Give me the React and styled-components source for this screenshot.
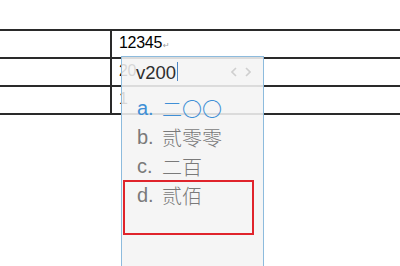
import React from "react";
import styled, { createGlobalStyle } from "styled-components";

const GlobalStyle = createGlobalStyle`
  html, body {
    margin: 0;
    padding: 0;
    background: #ffffff;
  }
  body {
    font-family: "Liberation Sans", Arial, sans-serif;
  }
`;

const Page = styled.div`
  position: relative;
  width: 400px;
  height: 266px;
  overflow: hidden;
  padding-top: 29px;
  box-sizing: border-box;
`;

const Table = styled.div`
  display: flex;
  flex-direction: column;
  border-bottom: 2px solid #2a2a2a;
`;

const Row = styled.div`
  display: grid;
  grid-template-columns: 110px 1fr;
  height: 26px;
  border-top: 2px solid #2a2a2a;
`;

const Cell = styled.div`
  padding: 3px 0 0 7px;
  font-size: 16px;
  letter-spacing: -0.3px;
  line-height: 18px;
  color: #000;
  border-left: ${(p) => (p.$divider ? "2px solid #2a2a2a" : "none")};
  white-space: nowrap;
`;

const Mark = styled.span`
  font-family: "DejaVu Sans", sans-serif;
  font-size: 8px;
  color: #9a9a9a;
  margin-left: 1px;
`;

const Popup = styled.div`
  position: absolute;
  left: 121px;
  top: 56px;
  width: 143px;
  height: 220px;
  box-sizing: border-box;
  border: 1px solid #8dbbdd;
  background: rgba(244, 244, 244, 0.88);
`;

const InputBar = styled.div`
  display: flex;
  align-items: center;
  height: 29px;
  margin: 0 6px 0 8px;
  padding-left: 6px;
  border-bottom: 1px solid #dcdcdc;
`;

const Typed = styled.span`
  font-size: 18.5px;
  line-height: 20px;
  color: #2e2e2e;
  padding-top: 2px;
`;

const Caret = styled.span`
  width: 1px;
  height: 19px;
  margin-left: 1px;
  background: #4d86c4;
`;

const Pager = styled.div`
  display: flex;
  gap: 8px;
  margin-left: auto;
  margin-right: 6px;
  padding-top: 1px;
`;

const List = styled.div`
  display: flex;
  flex-direction: column;
  padding: 7px 0 0 15px;
`;

const Item = styled.div`
  display: flex;
  height: 29px;
  align-items: center;
  font-size: 20px;
  color: ${(p) => (p.$active ? "#3f8fd6" : "#7a7a7a")};
`;

const Label = styled.span`
  width: 25px;
  font-family: "Liberation Sans", Arial, sans-serif;
`;

const Word = styled.span`
  font-family: "Noto Sans CJK SC", sans-serif;
  font-weight: 300;
`;

const Highlight = styled.div`
  position: absolute;
  left: 1px;
  top: 123px;
  width: 131px;
  height: 55px;
  box-sizing: border-box;
  border: 2px solid #e0242c;
`;

function Chevron({ dir }) {
  const pts = dir === "left" ? "5,1 1,5 5,9" : "1,1 5,5 1,9";
  return (
    <svg width="6" height="10" viewBox="0 0 6 10">
      <polyline points={pts} fill="none" stroke="#cfcfcf" strokeWidth="1.6" />
    </svg>
  );
}

const candidates = [
  { key: "a.", text: "二〇〇", active: true },
  { key: "b.", text: "贰零零" },
  { key: "c.", text: "二百" },
  { key: "d.", text: "贰佰" },
];

export default function App() {
  return (
    <>
      <GlobalStyle />
      <Page>
        <Table>
          <Row>
            <Cell />
            <Cell $divider>
              12345<Mark>↵</Mark>
            </Cell>
          </Row>
          <Row>
            <Cell />
            <Cell $divider>20</Cell>
          </Row>
          <Row>
            <Cell />
            <Cell $divider>1</Cell>
          </Row>
        </Table>

        <Popup>
          <InputBar>
            <Typed>v200</Typed>
            <Caret />
            <Pager>
              <Chevron dir="left" />
              <Chevron dir="right" />
            </Pager>
          </InputBar>
          <List>
            {candidates.map((c) => (
              <Item key={c.key} $active={c.active}>
                <Label>{c.key}</Label>
                <Word>{c.text}</Word>
              </Item>
            ))}
          </List>
          <Highlight />
        </Popup>
      </Page>
    </>
  );
}
